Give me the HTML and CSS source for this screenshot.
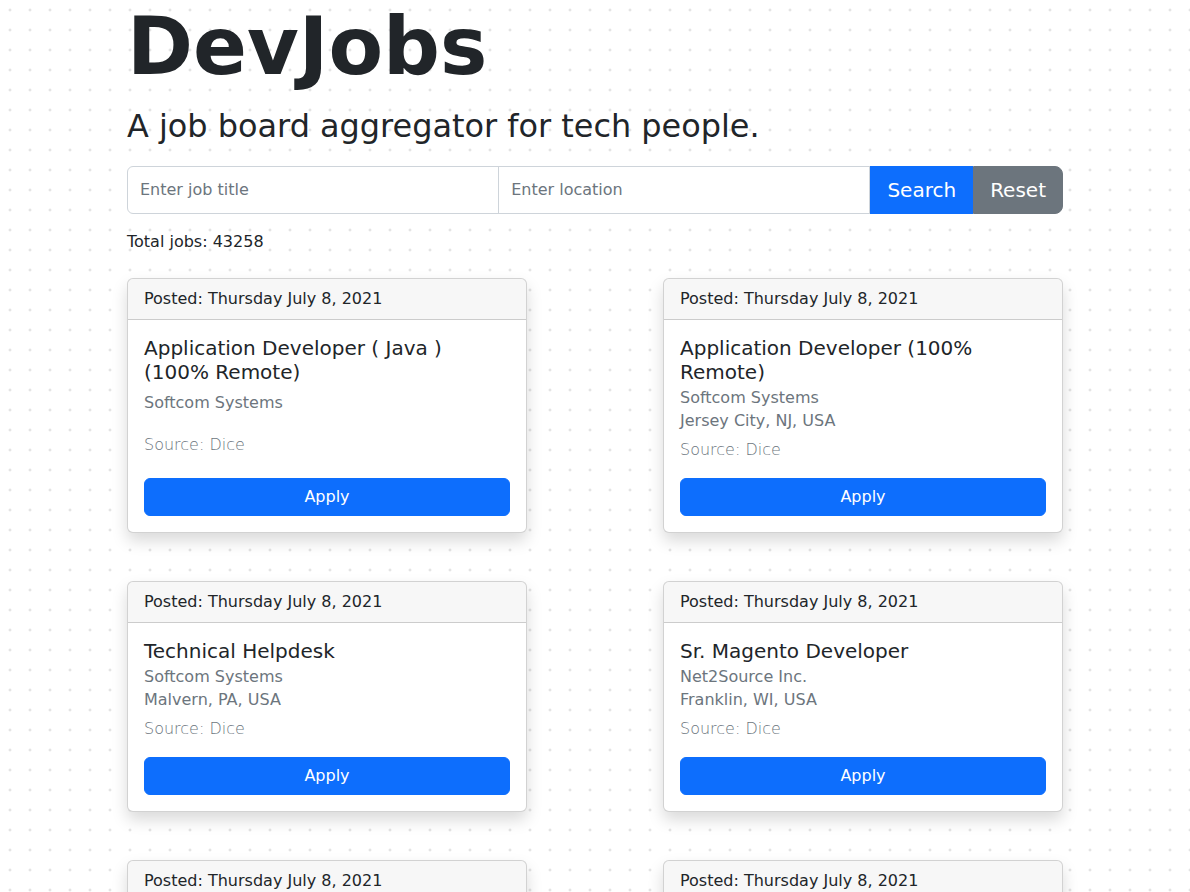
FILE: index.html
```html
<!DOCTYPE html>
<html lang="en">
<head>
<meta charset="utf-8">
<title>DevJobs</title>
<link rel="stylesheet" href="styles.css">
</head>
<body>
<main class="page">
  <h1 class="brand">DevJobs</h1>
  <h2 class="tagline">A job board aggregator for tech people.</h2>

  <form class="search">
    <input class="search-input" type="text" placeholder="Enter job title">
    <input class="search-input" type="text" placeholder="Enter location">
    <button class="btn btn-search" type="button">Search</button>
    <button class="btn btn-reset" type="button">Reset</button>
  </form>

  <p class="total">Total jobs: 43258</p>

  <section class="jobs">
    <article class="card">
      <div class="card-header">Posted: Thursday July 8, 2021</div>
      <div class="card-body">
        <h5 class="job-title">Application Developer ( Java ) (100% Remote)</h5>
        <h6 class="job-company">Softcom Systems</h6>
        <p class="job-location"></p>
        <p class="job-source">Source: Dice</p>
        <a class="apply" href="#">Apply</a>
      </div>
    </article>

    <article class="card">
      <div class="card-header">Posted: Thursday July 8, 2021</div>
      <div class="card-body">
        <h5 class="job-title">Application Developer (100% Remote)</h5>
        <h6 class="job-company">Softcom Systems</h6>
        <p class="job-location">Jersey City, NJ, USA</p>
        <p class="job-source">Source: Dice</p>
        <a class="apply" href="#">Apply</a>
      </div>
    </article>

    <article class="card">
      <div class="card-header">Posted: Thursday July 8, 2021</div>
      <div class="card-body">
        <h5 class="job-title">Technical Helpdesk</h5>
        <h6 class="job-company">Softcom Systems</h6>
        <p class="job-location">Malvern, PA, USA</p>
        <p class="job-source">Source: Dice</p>
        <a class="apply" href="#">Apply</a>
      </div>
    </article>

    <article class="card">
      <div class="card-header">Posted: Thursday July 8, 2021</div>
      <div class="card-body">
        <h5 class="job-title">Sr. Magento Developer</h5>
        <h6 class="job-company">Net2Source Inc.</h6>
        <p class="job-location">Franklin, WI, USA</p>
        <p class="job-source">Source: Dice</p>
        <a class="apply" href="#">Apply</a>
      </div>
    </article>

    <article class="card">
      <div class="card-header">Posted: Thursday July 8, 2021</div>
      <div class="card-body">
        <h5 class="job-title">Java Developer</h5>
        <h6 class="job-company">Softcom Systems</h6>
        <p class="job-location">Dallas, TX, USA</p>
        <p class="job-source">Source: Dice</p>
        <a class="apply" href="#">Apply</a>
      </div>
    </article>

    <article class="card">
      <div class="card-header">Posted: Thursday July 8, 2021</div>
      <div class="card-body">
        <h5 class="job-title">Senior .NET Developer</h5>
        <h6 class="job-company">Net2Source Inc.</h6>
        <p class="job-location">Atlanta, GA, USA</p>
        <p class="job-source">Source: Dice</p>
        <a class="apply" href="#">Apply</a>
      </div>
    </article>
  </section>
</main>
</body>
</html>
```

FILE: styles.css
```css
* {
  box-sizing: border-box;
}

html,
body {
  margin: 0;
}

body {
  font-family: "DejaVu Sans", "Noto Sans", sans-serif;
  font-size: 16px;
  line-height: 1.5;
  color: #212529;
  background-color: #ffffff;
  background-image: radial-gradient(circle, #e4e4e4 1.3px, rgba(255, 255, 255, 0) 1.7px);
  background-size: 20px 20px;
  background-position: 0 0;
}

.page {
  width: 936px;
  margin: 0 auto;
  padding-bottom: 40px;
}

.brand {
  font-size: 79.55px;
  font-weight: 700;
  line-height: 1.2;
  margin: -1px 0 12.5px;
}

.tagline {
  font-size: 31.91px;
  font-weight: 400;
  line-height: 1.2;
  margin: 0 0 21px;
}

.search {
  display: flex;
  height: 48px;
  margin: 0 0 16px;
}

.search-input {
  flex: 1 1 0;
  min-width: 0;
  border: 1px solid #ced4da;
  background: #ffffff;
  padding: 6px 12px;
  font-family: inherit;
  font-size: 16px;
  line-height: 1.5;
  color: #212529;
  outline: none;
}

.search-input::placeholder {
  color: #6c757d;
  opacity: 1;
}

.search-input:first-child {
  border-radius: 6px 0 0 6px;
}

.search-input + .search-input {
  margin-left: -1px;
}

.btn {
  font-family: inherit;
  font-size: 20px;
  line-height: 1.5;
  padding: 8px 16px;
  color: #ffffff;
  border: 1px solid transparent;
  cursor: pointer;
}

.btn-search {
  background: #0d6efd;
  border-color: #0d6efd;
  border-radius: 0;
}

.btn-reset {
  background: #6c757d;
  border-color: #6c757d;
  border-radius: 0 8px 8px 0;
}

.total {
  margin: 0 0 24px;
}

.jobs {
  display: grid;
  grid-template-columns: 400px 400px;
  justify-content: space-between;
  row-gap: 48.5px;
}

.card {
  display: flex;
  flex-direction: column;
  background: #ffffff;
  border: 1px solid rgba(0, 0, 0, 0.175);
  border-radius: 6px;
  box-shadow: 0 8px 16px rgba(0, 0, 0, 0.15);
}

.card-header {
  padding: 8px 16px;
  background: rgba(0, 0, 0, 0.03);
  border-bottom: 1px solid rgba(0, 0, 0, 0.175);
  border-radius: 5px 5px 0 0;
}

.card-body {
  flex: 1 1 auto;
  display: flex;
  flex-direction: column;
  justify-content: space-between;
  padding: 16px;
}

.job-title {
  font-size: 20px;
  font-weight: 400;
  line-height: 1.2;
  margin: 0 0 4px;
}

.job-company {
  font-size: 16px;
  font-weight: 400;
  line-height: 1.2;
  margin: 0;
  color: #6c757d;
}

.job-location {
  min-height: 5px;
  margin: 2px 0 4.8px;
  color: #6c757d;
}

.job-source {
  margin: 0 0 15.5px;
  color: #6c757d;
  font-weight: 300;
}

.apply {
  display: block;
  padding: 6px 12px;
  font-size: 16px;
  line-height: 1.5;
  text-align: center;
  text-decoration: none;
  color: #ffffff;
  background: #0d6efd;
  border: 1px solid #0d6efd;
  border-radius: 6px;
}
```
